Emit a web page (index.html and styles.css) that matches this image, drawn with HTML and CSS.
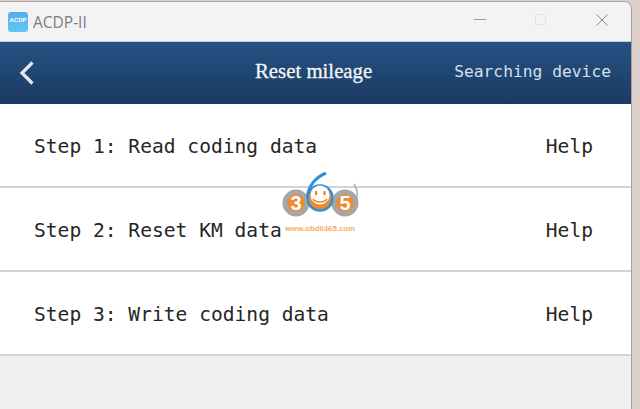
FILE: index.html
```html
<!DOCTYPE html>
<html lang="en">
<head>
<meta charset="utf-8">
<title>ACDP-II</title>
<link rel="stylesheet" href="styles.css">
</head>
<body>
<div class="window">
  <div class="titlebar">
    <div class="app-icon"><span>ACDP</span></div>
    <div class="app-name">ACDP-II</div>
    <div class="win-controls">
      <svg class="ctl" width="14" height="14" viewBox="0 0 14 14"><path d="M1 6.5H13" stroke="#9a9a9a" stroke-width="1" fill="none"/></svg>
      <svg class="ctl" width="14" height="14" viewBox="0 0 14 14"><rect x="1.5" y="1.5" width="10" height="10" rx="1" stroke="#e2e2e2" stroke-width="1" fill="none"/></svg>
      <svg class="ctl" width="14" height="14" viewBox="0 0 14 14"><path d="M1.5 1.5L12.5 12.5M12.5 1.5L1.5 12.5" stroke="#8a8a8a" stroke-width="1" fill="none"/></svg>
    </div>
  </div>
  <header class="appbar">
    <svg class="back" width="18" height="26" viewBox="0 0 18 26"><path d="M14.5 2.5L4 13L14.5 23.5" stroke="#e4e9ef" stroke-width="3.2" fill="none"/></svg>
    <div class="title">Reset mileage</div>
    <div class="status">Searching device</div>
  </header>
  <main class="steps">
    <div class="step"><span>Step 1: Read coding data</span><span>Help</span></div>
    <div class="step"><span>Step 2: Reset KM data</span><span>Help</span></div>
    <div class="step"><span>Step 3: Write coding data</span><span>Help</span></div>
  </main>
</div>
<div class="watermark">
  <svg width="80" height="50" viewBox="0 0 80 50">
    <path d="M74 12C78 18 78 25 75 31" stroke="#b0b0b0" stroke-width="1.6" fill="none"/>
    <circle cx="16" cy="31" r="11" fill="#ee8a2a" stroke="#a6a6a6" stroke-width="5"/>
    <circle cx="65" cy="31" r="11" fill="#ee8a2a" stroke="#a6a6a6" stroke-width="5"/>
    <circle cx="40" cy="26" r="13.5" fill="#fff"/>
    <path d="M46 1C36 5 28 14 27.5 25" stroke="#2f8fd8" stroke-width="3" fill="none"/>
    <circle cx="40" cy="26" r="12.5" fill="#ee8a2a" stroke="#2f8fd8" stroke-width="2.6"/>
    <circle cx="40" cy="23" r="9.5" fill="#fff"/>
    <ellipse cx="36" cy="21" rx="1.3" ry="2.6" fill="#ee8a2a"/>
    <ellipse cx="44.5" cy="21" rx="1.3" ry="2.6" fill="#ee8a2a"/>
    <path d="M33 27C36 31 44 31 47 27" stroke="#ee8a2a" stroke-width="1.6" fill="none"/>
    <text x="16" y="38" class="wm-num">3</text>
    <text x="65" y="38" class="wm-num">5</text>
  </svg>
  <div class="wm-url">www.obdii365.com</div>
</div>
</body>
</html>
```
FILE: styles.css
```css
* { box-sizing: border-box; }
html, body { margin: 0; height: 100%; }
body {
  width: 640px;
  height: 409px;
  overflow: hidden;
  position: relative;
  background: #dccfcc;
  padding-top: 1px;
}
.window {
  width: 632px;
  height: 408px;
  background: #efefef;
  border-top: 1px solid #a9a9a9;
  border-right: 1px solid #a5a0a0;
  border-top-right-radius: 8px;
  overflow: hidden;
}
.titlebar {
  height: 40px;
  background: #f3f3f4;
  border-bottom: 1px solid #c6ccd2;
  display: flex;
  align-items: center;
  padding-left: 8px;
}
.app-icon {
  width: 20px;
  height: 20px;
  border-radius: 3px;
  background: linear-gradient(#52b0ee, #62c6f4);
  display: flex;
  justify-content: center;
  padding-top: 4px;
}
.app-icon span {
  font: bold 6px/8px "Liberation Sans", sans-serif;
  color: #fff;
}
.app-name {
  margin-left: 5px;
  font: 15.5px "Open Sans", sans-serif;
  color: #7d7d7d;
}
.win-controls {
  margin-left: auto;
  margin-right: 22px;
  margin-bottom: 3px;
  display: flex;
  gap: 47px;
}
.appbar {
  height: 62px;
  background: linear-gradient(#265283, #1b3a61);
  display: flex;
  align-items: center;
  position: relative;
  padding: 0 20px 0 18px;
}
.title {
  position: absolute;
  left: 255px;
  margin-bottom: 4px;
  font: 20.8px "Liberation Serif", serif;
  color: #f2f4f6;
  -webkit-text-stroke: 0.3px #f2f4f6;
}
.status {
  margin-left: auto;
  margin-bottom: 4px;
  font: 16.3px "DejaVu Sans Mono", monospace;
  color: #d5e0ea;
}
.step {
  height: 84px;
  background: #fff;
  border-bottom: 2px solid #d3d3d3;
  display: flex;
  align-items: center;
  justify-content: space-between;
  padding: 3px 38px 0 34px;
  font: 19.6px "DejaVu Sans Mono", monospace;
  color: #262626;
}
.watermark {
  position: absolute;
  left: 280px;
  top: 172px;
  width: 80px;
  text-align: center;
}
.watermark svg { display: block; }
.wm-num {
  font: bold 20px "Liberation Sans", sans-serif;
  fill: #fff;
  text-anchor: middle;
}
.wm-url {
  font: bold 7.8px/9px "Liberation Sans", sans-serif;
  color: #f3ad63;
  white-space: nowrap;
  margin-top: 2px;
}
```
